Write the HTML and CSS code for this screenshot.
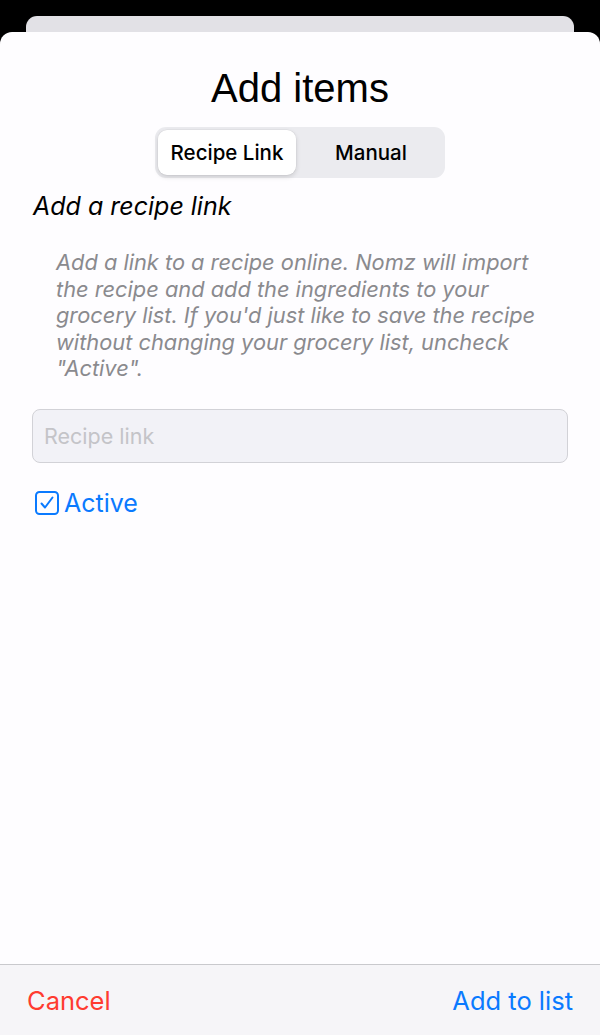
FILE: index.html
```html
<!DOCTYPE html>
<html lang="en">
<head>
<meta charset="utf-8">
<title>Add items</title>
<link rel="stylesheet" href="styles.css">
</head>
<body>
<div class="screen">
  <div class="back-card"></div>
  <div class="sheet">
    <div class="content">
      <h1 class="title">Add items</h1>
      <div class="segmented">
        <div class="segment selected">Recipe Link</div>
        <div class="segment">Manual</div>
      </div>
      <h2 class="section-title">Add a recipe link</h2>
      <p class="hint">Add a link to a recipe online. Nomz will import the recipe and add the ingredients to your grocery list. If you'd just like to save the recipe without changing your grocery list, uncheck "Active".</p>
      <div class="input">Recipe link</div>
      <label class="check-row">
        <span class="checkbox">
          <svg viewBox="0 0 24 24" width="24" height="24"><rect x="1" y="1" width="22" height="22" rx="3.5" fill="none" stroke="#0a7aff" stroke-width="2"/><path d="M6.5 12.5 L10 16.5 L17.5 6.5" fill="none" stroke="#0a7aff" stroke-width="2" stroke-linecap="round" stroke-linejoin="round"/></svg>
        </span>
        <span class="check-label">Active</span>
      </label>
    </div>
    <div class="footer">
      <span class="cancel">Cancel</span>
      <span class="add">Add to list</span>
    </div>
  </div>
</div>
</body>
</html>
```
FILE: styles.css
```css
* { box-sizing: border-box; }
html, body {
  margin: 0;
  padding: 0;
  background: #000;
  width: 600px;
  height: 1035px;
  overflow: hidden;
  font-family: Inter, "Liberation Sans", Arial, sans-serif;
}
.screen {
  display: flex;
  flex-direction: column;
  height: 1035px;
  padding-top: 16px;
}
.back-card {
  margin: 0 26px;
  height: 16px;
  background: #e2e1e6;
  border-radius: 11px 11px 0 0;
}
.sheet {
  flex: 1;
  background: #fefdff;
  border-radius: 12px 12px 0 0;
  display: flex;
  flex-direction: column;
}
.content {
  flex: 1;
  padding: 32px 32px 0 32px;
  display: flex;
  flex-direction: column;
}
.title {
  margin: 0;
  font-family: "Liberation Sans", Arial, sans-serif;
  font-weight: 400;
  font-size: 40px;
  line-height: 48px;
  text-align: center;
  color: #000;
}
.segmented {
  align-self: center;
  margin-top: 15px;
  width: 290px;
  height: 51px;
  padding: 3px;
  background: #ebebef;
  border-radius: 11px;
  display: grid;
  grid-template-columns: 1fr 1fr;
}
.segment {
  display: flex;
  align-items: center;
  justify-content: center;
  font-weight: 500;
  font-size: 20.5px;
  color: #000;
}
.segment.selected {
  background: #fff;
  border-radius: 9px;
  box-shadow: 0 2px 5px rgba(0,0,0,0.14), 0 0 0 0.5px rgba(0,0,0,0.05);
  margin-right: 4px;
}
.section-title {
  margin: 12px 0 0 1px;
  font-weight: 400;
  font-style: italic;
  font-size: 25px;
  line-height: 32px;
  color: #000;
}
.hint {
  margin: 27px 0 0 24px;
  width: 490px;
  font-style: italic;
  font-size: 21.8px;
  line-height: 26.5px;
  color: #8a8a8e;
}
.input {
  margin-top: 27px;
  height: 54px;
  border: 1px solid #d2d2d7;
  border-radius: 8px;
  background: #f2f2f7;
  padding-left: 11px;
  display: flex;
  align-items: center;
  font-size: 21.5px;
  color: #c4c4c8;
}
.check-row {
  margin-top: 25px;
  height: 30px;
  display: flex;
  align-items: center;
  gap: 5px;
  padding-left: 3px;
  color: #0a7aff;
}
.checkbox {
  display: flex;
  width: 24px;
  height: 24px;
}
.check-label {
  font-size: 25px;
}
.footer {
  height: 71px;
  border-top: 1px solid #c9c9cd;
  background: #f6f5f8;
  display: flex;
  align-items: center;
  justify-content: space-between;
  padding: 0 27px 0 27px;
  font-size: 25.5px;
}
.cancel { color: #ff3b30; }
.add { color: #0a7aff; }
```
